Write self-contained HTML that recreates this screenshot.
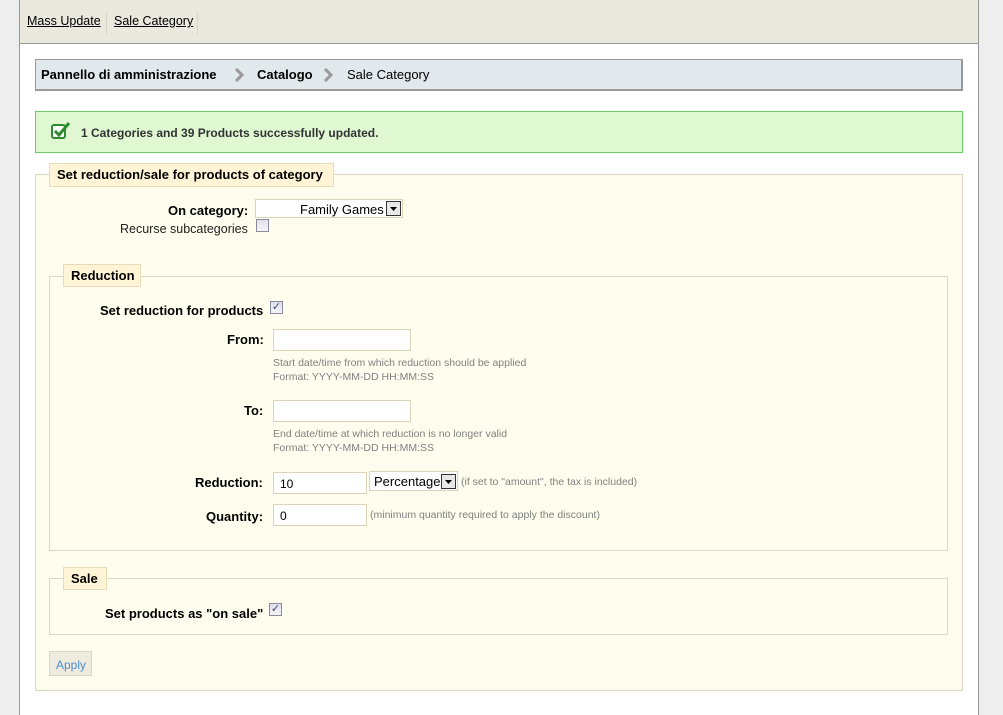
<!DOCTYPE html>
<html><head><meta charset="utf-8"><style>
*{margin:0;padding:0;box-sizing:border-box}
body{width:1003px;height:715px;background:#eeeeee;font-family:"Liberation Sans",Arial,sans-serif;font-size:12px;color:#000;position:relative;overflow:hidden}
.a{position:absolute}
.main{left:19px;top:0;width:960px;height:715px;background:#fff;border-left:1px solid #999;border-right:1px solid #999}
.hdr{left:20px;top:0;width:958px;height:44px;background:#ebe8de;border-bottom:1px solid #999}
.b{font-weight:bold;font-size:13px}
.inp{background:#fff;border:1px solid #ddd3b8;height:22px;font-size:12px;padding:4px 6px}
.hint{color:#7f7f7f;font-size:10.5px;line-height:14px}
.cb{width:13px;height:13px;border:1px solid #8a8a9a;background:linear-gradient(#dfe0ea,#f4f4f8)}
.leg{background:#fff5d6;border:1px solid #e7dcb8;font-weight:bold;font-size:13px;padding:3px 7px 0}
.arrow{width:15px;height:15px;border:1px solid #333;background:#e8e8e8}
.chev{width:14px;height:14px}
</style></head><body>
<div class="a main"></div>
<div class="a hdr"></div>
<div class="a" style="left:27px;top:14px;font-size:12.5px;text-decoration:underline">Mass Update</div>
<div class="a" style="left:106px;top:13px;width:1px;height:21px;background:#d6d2c4"></div>
<div class="a" style="left:114px;top:14px;font-size:12.5px;text-decoration:underline">Sale Category</div>
<div class="a" style="left:197px;top:13px;width:1px;height:21px;background:#d6d2c4"></div>

<div class="a" style="left:35px;top:59px;width:928px;height:32px;background:#e1e9ec;border:1px solid #999;border-width:1px 2px 2px 1px"></div>
<div class="a b" style="left:41px;top:67px">Pannello di amministrazione</div>
<svg class="a chev" style="left:233px;top:68px"><path d="M3 1 L9 7 L3 13" fill="none" stroke="#999" stroke-width="3"/></svg>
<div class="a b" style="left:257px;top:67px">Catalogo</div>
<svg class="a chev" style="left:322px;top:68px"><path d="M3 1 L9 7 L3 13" fill="none" stroke="#999" stroke-width="3"/></svg>
<div class="a" style="left:347px;top:67px;font-size:13px">Sale Category</div>

<div class="a" style="left:35px;top:111px;width:928px;height:42px;background:#dff8d2;border:1px solid #6ccc6c"></div>
<svg class="a" style="left:51px;top:121px" width="20" height="20" viewBox="0 0 20 20"><rect x="1" y="4" width="13" height="13" rx="2" fill="#fff" stroke="#2e8b2e" stroke-width="2"/><path d="M4 10 L8 14 L18 2" fill="none" stroke="#2e8b2e" stroke-width="3"/></svg>
<div class="a" style="left:81px;top:126px;font-weight:bold;font-size:12px;color:#333">1 Categories and 39 Products successfully updated.</div>

<div class="a" style="left:35px;top:174px;width:928px;height:517px;background:#fffeee;border:1px solid #ddd6c2"></div>
<div class="a leg" style="left:49px;top:163px;width:285px;height:24px">Set reduction/sale for products of category</div>

<div class="a b" style="left:168px;top:203px">On category:</div>
<div class="a" style="left:255px;top:199px;width:148px;height:19px;background:#fff;border:1px solid #ddd3b8"></div>
<div class="a" style="left:300px;top:202px;font-size:13px">Family Games</div>
<div class="a arrow" style="left:386px;top:201px"><svg width="13" height="13"><path d="M3 5 L10 5 L6.5 9Z" fill="#000"/></svg></div>
<div class="a" style="left:120px;top:222px;font-size:12.5px;color:#222">Recurse subcategories</div>
<div class="a cb" style="left:256px;top:219px"></div>

<div class="a" style="left:49px;top:276px;width:899px;height:275px;border:1px solid #ddd6c2"></div>
<div class="a leg" style="left:63px;top:264px;width:78px;height:23px">Reduction</div>
<div class="a b" style="left:100px;top:303px">Set reduction for products</div>
<div class="a cb" style="left:270px;top:301px;color:#447;font-size:11px;line-height:11px;text-align:center">&#10003;</div>

<div class="a b" style="left:227px;top:332px">From:</div>
<div class="a inp" style="left:273px;top:329px;width:138px"></div>
<div class="a hint" style="left:273px;top:356px">Start date/time from which reduction should be applied<br>Format: YYYY-MM-DD HH:MM:SS</div>
<div class="a b" style="left:244px;top:403px">To:</div>
<div class="a inp" style="left:273px;top:400px;width:138px"></div>
<div class="a hint" style="left:273px;top:427px">End date/time at which reduction is no longer valid<br>Format: YYYY-MM-DD HH:MM:SS</div>

<div class="a b" style="left:195px;top:475px">Reduction:</div>
<div class="a inp" style="left:273px;top:472px;width:94px">10</div>
<div class="a" style="left:369px;top:471px;width:89px;height:20px;background:#fff;border:1px solid #ddd3b8"></div>
<div class="a" style="left:374px;top:474px;font-size:13px">Percentage</div>
<div class="a arrow" style="left:441px;top:474px"><svg width="13" height="13"><path d="M3 5 L10 5 L6.5 9Z" fill="#000"/></svg></div>
<div class="a hint" style="left:461px;top:475px">(if set to "amount", the tax is included)</div>
<div class="a b" style="left:206px;top:509px">Quantity:</div>
<div class="a inp" style="left:273px;top:504px;width:94px">0</div>
<div class="a hint" style="left:370px;top:508px">(minimum quantity required to apply the discount)</div>

<div class="a" style="left:49px;top:578px;width:899px;height:57px;border:1px solid #ddd6c2"></div>
<div class="a leg" style="left:63px;top:567px;width:44px;height:23px">Sale</div>
<div class="a b" style="left:105px;top:606px">Set products as "on sale"</div>
<div class="a cb" style="left:269px;top:603px;color:#447;font-size:11px;line-height:11px;text-align:center">&#10003;</div>

<div class="a" style="left:49px;top:651px;width:43px;height:25px;background:#efebde;border:1px solid #ddd6c2;color:#4a90d0;font-size:12px;padding:6px 0 0 6px">Apply</div>
</body></html>
